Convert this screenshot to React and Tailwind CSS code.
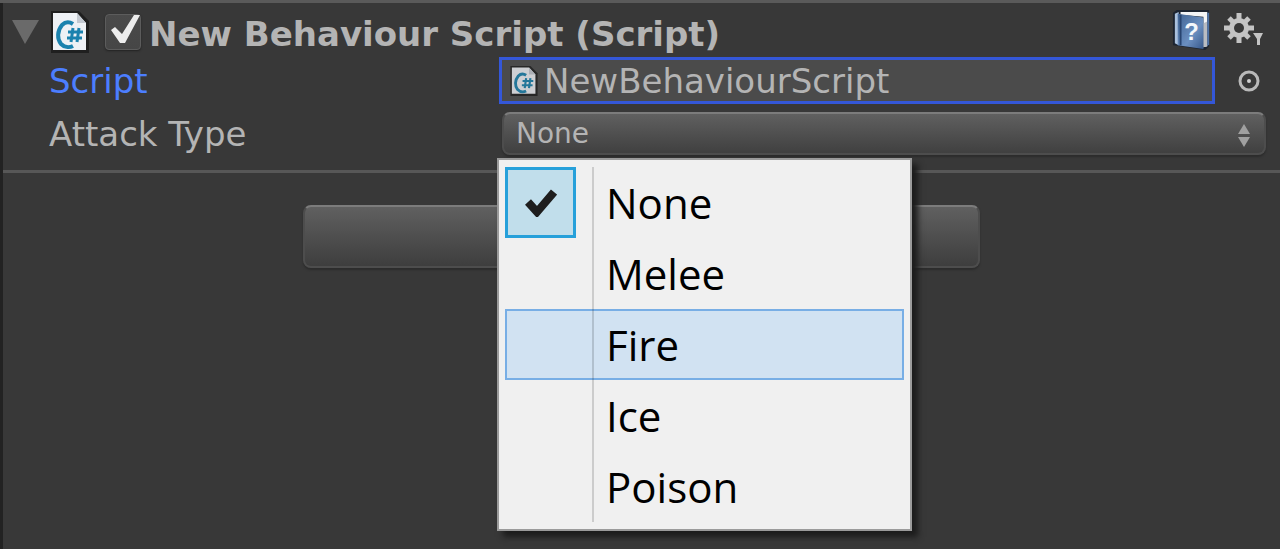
import { useState } from "react";

const attackTypes = ["None", "Melee", "Fire", "Ice", "Poison"];

function ScriptIcon({ className }) {
    return (
        <svg className={className} viewBox="0 0 38 42" aria-hidden="true">
            <path d="M0 0H28L38 10V42H0Z" fill="#1f1f1f" />
            <path d="M2 2H26L35 12V39H2Z" fill="#eef1f5" />
            <path d="M26 2V12H35Z" fill="#c3c9d1" />
            {/* C# mark */}
            <g fill="none" stroke="#1b82ae">
                <path d="M22 13C19 11 15 10 11 14C6 20 6 28 10 33C13 36 18 37 22 35" strokeWidth="4" />
                <path d="M17 21H32M16 27H31" strokeWidth="3" />
                <path d="M22 17L20 31M28 17L26 31" strokeWidth="3" />
            </g>
        </svg>
    );
}

function HelpIcon() {
    return (
        <svg className="w-10 h-10" viewBox="0 0 40 42" aria-hidden="true">
            <defs>
                <linearGradient id="cover" x1="0" y1="0" x2="1" y2="1">
                    <stop offset="0" stopColor="#3f6394" />
                    <stop offset="0.6" stopColor="#6b8fc0" />
                    <stop offset="1" stopColor="#36578a" />
                </linearGradient>
            </defs>
            <path d="M0 3L4 0H38V38L34 42L0 37Z" fill="#1c2431" />
            <path d="M2 4L6 2V37L2 35Z" fill="#a9c0dd" />
            <path d="M8 2H36V38L32 39V7L8 5Z" fill="#f2f4f7" />
            <path d="M32 14L36 12V38L32 39Z" fill="#b9bcc2" />
            <path d="M36 3H38V36L36 38Z" fill="#4f73a6" />
            <path d="M5 4L32 8V41L5 37Z" fill="url(#cover)" />
            <path d="M8 5V37" stroke="#28446f" strokeWidth="2" />
            <text x="12" y="31" fontSize="25" fontWeight="bold" fill="#f4f7fb" fontFamily="'Liberation Sans', sans-serif">?</text>
        </svg>
    );
}

function GearIcon() {
    return (
        <svg className="w-10 h-[34px]" viewBox="0 0 40 34" aria-hidden="true">
            <g stroke="#c4c4c4" strokeWidth="5">
                <path d="M15 0V30" />
                <path d="M0 15H30" />
                <path d="M5 5L25 25" />
                <path d="M25 5L5 25" />
            </g>
            <circle cx="15" cy="15" r="10" fill="#c4c4c4" />
            <circle cx="15" cy="15" r="5" fill="#383838" />
            <path d="M29 20H39L36 26V32H33V26Z" fill="#c4c4c4" />
        </svg>
    );
}

function App() {

    const [enabled, setEnabled] = useState(true);
    const [attackType, setAttackType] = useState("None");
    const [hovered, setHovered] = useState("Fire");

    return (

        <div className="min-h-screen flex flex-col bg-[#383838] border-t-[3px] border-t-[#5a5a5a] text-[#b4b4b4] text-[34px] leading-10" style={{fontFamily: "'DejaVu Sans', Verdana, sans-serif"}}>
            <div className="flex-1 border-l-[3px] border-l-[#222222]">

                {/* Component header */}
                <div className="flex items-center h-[54px] pt-1 pl-2 pr-4">
                    <button aria-label="Collapse" className="w-8 h-8 flex items-center">
                        <svg className="w-7 h-6" viewBox="0 0 28 24" aria-hidden="true">
                            <path d="M1 0H28L14 24Z" fill="#6a6a6a" />
                        </svg>
                    </button>
                    <ScriptIcon className="ml-2 w-[38px] h-[42px]" />
                    <label className="flex items-center ml-4">
                        <span className="relative block w-9 h-9">
                            <input
                                type="checkbox"
                                className="appearance-none block w-9 h-9 rounded-sm border border-[#5c5c5c] bg-linear-to-b from-[#4a4a4a] to-[#464646] shadow-[0_1px_2px_#222222]"
                                checked={enabled}
                                onChange={() => setEnabled(!enabled)}
                            />
                            {
                                enabled && <svg className="absolute inset-0 pointer-events-none" viewBox="0 0 36 36" aria-hidden="true">
                                    <path d="M6 16L10 13L17 20L29 1H35L20 29H15Z" fill="#ededed" />
                                </svg>
                            }
                        </span>
                        <span className="ml-2 pt-1 font-bold whitespace-nowrap">New Behaviour Script (Script)</span>
                    </label>
                    <div className="flex items-center ml-auto gap-3 pb-1">
                        <button aria-label="Help"><HelpIcon /></button>
                        <button aria-label="Settings"><GearIcon /></button>
                    </div>
                </div>

                {/* Script reference */}
                <div className="flex items-center pl-[46px] pr-[14px]">
                    <label htmlFor="script" className="w-[450px] shrink-0 text-[#4c7eff]">Script</label>
                    <div className="flex flex-1 items-center h-[47px] pl-2 border-[3px] border-[#3457d8] bg-[#4b4b4b]">
                        <ScriptIcon className="w-7 h-[30px] shrink-0 opacity-80" />
                        <input id="script" readOnly value="NewBehaviourScript" className="ml-[6px] min-w-0 flex-1 h-10 bg-transparent outline-none" />
                    </div>
                    <button aria-label="Select script" className="w-[51px] flex justify-center pl-4">
                        <svg className="w-6 h-6" viewBox="0 0 24 24" aria-hidden="true">
                            <circle cx="12" cy="12" r="9" fill="none" stroke="#b9b9b9" strokeWidth="3" />
                            <circle cx="12" cy="12" r="2" fill="#d0d0d0" />
                        </svg>
                    </button>
                </div>

                {/* Attack type */}
                <div className="flex items-center mt-2 pl-[46px] pr-[14px]">
                    <label htmlFor="attack" className="w-[450px] mr-[3px] shrink-0">Attack Type</label>
                    <div className="relative flex-1">
                        <select
                            id="attack"
                            className="appearance-none block w-full h-[43px] px-3 text-[28px] leading-9 rounded-lg border-2 border-[#4d4d4d] border-t-[#7c7c7c] bg-linear-to-b from-[#606060] to-[#404040] shadow-[0_2px_2px_#2c2c2c] outline-none"
                            value={attackType}
                            onChange={(e) => setAttackType(e.target.value)}
                        >
                            {attackTypes.map((type) => <option key={type}>{type}</option>)}
                        </select>
                        <svg className="absolute right-4 top-3 w-3 h-6 pointer-events-none" viewBox="0 0 12 24" aria-hidden="true">
                            <path d="M6 0L12 10H0Z" fill="#a0a0a0" />
                            <path d="M6 23L12 13H0Z" fill="#a0a0a0" />
                        </svg>

                        <ul
                            className="absolute -left-[5px] top-[46px] z-10 w-[415px] px-[6px] py-[7px] border-2 border-[#9b9b9b] bg-[#f0f0f0] text-black text-[42px] leading-[60px] shadow-[6px_6px_6px_#1c1c1c]"
                            style={{fontFamily: "'Open Sans', 'Segoe UI', sans-serif"}}
                        >
                            {attackTypes.map((type) => (
                                <li key={type}>
                                    <button
                                        className={"flex items-center w-full h-[71px] text-left border-2 " + (hovered === type ? "bg-[#d1e2f2] border-[#78aee5]" : "border-transparent")}
                                        onMouseEnter={() => setHovered(type)}
                                        onClick={() => setAttackType(type)}
                                    >
                                        <span className={"-m-[2px] w-[71px] h-[71px] shrink-0 flex items-center justify-center " + (attackType === type ? "border-[3px] border-[#26a0da] bg-[#c1deeb]" : "")}>
                                            {
                                                attackType === type && <svg className="w-8 h-7" viewBox="0 0 32 28" aria-hidden="true">
                                                    <path d="M3 13L12 23L29 3" fill="none" stroke="#1e1e1e" strokeWidth="8" />
                                                </svg>
                                            }
                                        </span>
                                        <span className="pl-8">{type}</span>
                                    </button>
                                </li>
                            ))}
                            <li aria-hidden="true" className="absolute left-[93px] top-[7px] bottom-[7px] w-[2px] bg-black/15 pointer-events-none"></li>
                        </ul>
                    </div>
                </div>

                <div className="mt-[15px] h-[3px] bg-[#575757]"></div>

                <div className="flex justify-center mt-8">
                    <button aria-label="Add Component" className="w-[53%] h-[63px] rounded-lg border-2 border-[#4d4d4d] border-t-[#7c7c7c] bg-linear-to-b from-[#606060] to-[#3e3e3e] shadow-[0_2px_2px_#2c2c2c]"></button>
                </div>
            </div>
        </div>

    );
}

export default App;
